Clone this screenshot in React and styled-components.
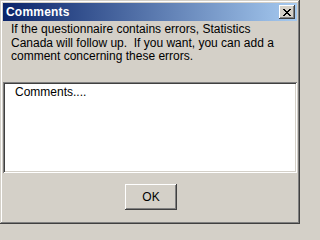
import React from "react";
import styled, { createGlobalStyle } from "styled-components";

const Global = createGlobalStyle`
  html, body { margin: 0; padding: 0; background: #d4d0c8; }
  body { font-family: "Liberation Sans", Arial, sans-serif; }
`;

const Window = styled.div`
  box-sizing: border-box;
  width: 300px;
  height: 224px;
  padding: 3px;
  background: #d4d0c8;
  display: flex;
  flex-direction: column;
  box-shadow: inset -1px -1px #404040, inset 1px 1px #d4d0c8,
    inset -2px -2px #808080, inset 2px 2px #ffffff;
`;

const TitleBar = styled.div`
  height: 18px;
  flex: none;
  display: flex;
  align-items: center;
  justify-content: space-between;
  padding: 0 2px 0 3px;
  background: linear-gradient(to right, #0a246a, #a6caf0);
`;

const Title = styled.span`
  color: #ffffff;
  font-weight: bold;
  font-size: 12px;
  letter-spacing: 0.2px;
`;

const CloseButton = styled.button`
  box-sizing: border-box;
  width: 16px;
  height: 14px;
  padding: 0;
  border: none;
  background: #d4d0c8;
  display: flex;
  align-items: center;
  justify-content: center;
  box-shadow: inset -1px -1px #404040, inset 1px 1px #ffffff,
    inset -2px -2px #808080;
`;

const Message = styled.p`
  margin: 0;
  padding: 2px 6px 0 8px;
  font-size: 12px;
  line-height: 13.5px;
  color: #000;
`;

const CommentBox = styled.textarea`
  box-sizing: border-box;
  display: block;
  margin-top: 18px;
  width: 100%;
  height: 91px;
  resize: none;
  border: none;
  outline: none;
  padding: 4px 10px 4px 12px;
  background: #ffffff;
  font-family: "Liberation Sans", Arial, sans-serif;
  font-size: 12px;
  line-height: 13px;
  color: #000;
  box-shadow: inset 1px 1px #808080, inset -1px -1px #ffffff,
    inset 2px 2px #404040, inset -2px -2px #d4d0c8;
`;

const Footer = styled.div`
  display: flex;
  justify-content: center;
  padding-top: 11px;
`;

const Button = styled.button`
  box-sizing: border-box;
  width: 52px;
  height: 26px;
  margin-left: 2px;
  border: none;
  background: #d4d0c8;
  font-family: "Liberation Sans", Arial, sans-serif;
  font-size: 12px;
  color: #000;
  padding: 0;
  box-shadow: inset -1px -1px #404040, inset 1px 1px #ffffff,
    inset -2px -2px #808080;
`;

const XIcon = () => (
  <svg width="8" height="7" viewBox="0 0 8 7" shapeRendering="crispEdges">
    <path
      fill="#000"
      d="M0 0h2v1h1v1h2V1h1V0h2v1H7v1H6v1H5v1h1v1h1v1h1v1H6V6H5V5H3v1H2v1H0V6h1V5h1V4h1V3H2V2H1V1H0z"
    />
  </svg>
);

export default function App() {
  return (
    <>
      <Global />
      <Window>
        <TitleBar>
          <Title>Comments</Title>
          <CloseButton aria-label="Close">
            <XIcon />
          </CloseButton>
        </TitleBar>
        <Message>
          If the questionnaire contains errors, Statistics Canada will follow
          up.&nbsp; If you want, you can add a comment concerning these errors.
        </Message>
        <CommentBox defaultValue="Comments...." />
        <Footer>
          <Button>OK</Button>
        </Footer>
      </Window>
    </>
  );
}
